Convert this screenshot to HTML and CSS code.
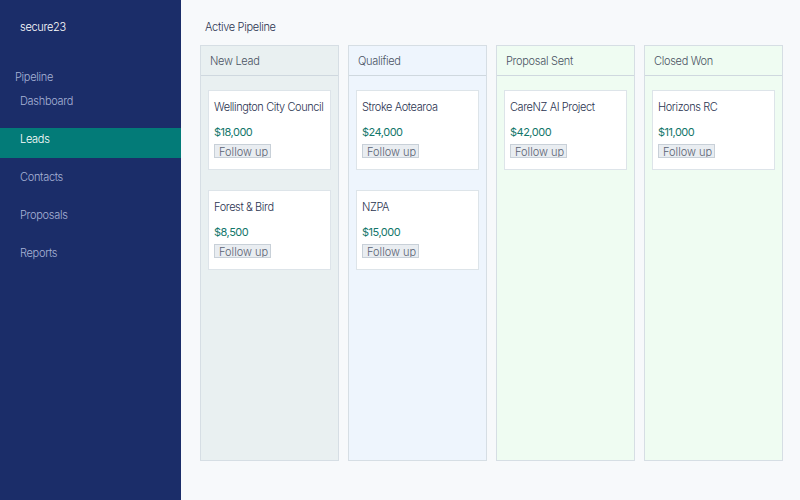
FILE: index.html
```html
<!DOCTYPE html>
<html>
<head>
<meta charset="utf-8">
<link rel="stylesheet" href="styles.css">
</head>
<body>
<div class="app">
  <aside class="sidebar">
    <div class="brand">secure23</div>
    <div class="section">Pipeline</div>
    <nav class="nav">
      <div class="nav-item">Dashboard</div>
      <div class="nav-item active">Leads</div>
      <div class="nav-item">Contacts</div>
      <div class="nav-item">Proposals</div>
      <div class="nav-item">Reports</div>
    </nav>
  </aside>
  <main class="main">
    <h1 class="title">Active Pipeline</h1>
    <div class="board">
      <section class="col col-new">
        <div class="col-head">New Lead</div>
        <div class="col-body">
          <div class="card">
            <div class="card-name">Wellington City Council</div>
            <div class="card-price">$18,000</div>
            <button class="btn">Follow up</button>
          </div>
          <div class="card">
            <div class="card-name">Forest &amp; Bird</div>
            <div class="card-price">$8,500</div>
            <button class="btn">Follow up</button>
          </div>
        </div>
      </section>
      <section class="col col-qual">
        <div class="col-head">Qualified</div>
        <div class="col-body">
          <div class="card">
            <div class="card-name">Stroke Aotearoa</div>
            <div class="card-price">$24,000</div>
            <button class="btn">Follow up</button>
          </div>
          <div class="card">
            <div class="card-name">NZPA</div>
            <div class="card-price">$15,000</div>
            <button class="btn">Follow up</button>
          </div>
        </div>
      </section>
      <section class="col col-prop">
        <div class="col-head">Proposal Sent</div>
        <div class="col-body">
          <div class="card">
            <div class="card-name">CareNZ AI Project</div>
            <div class="card-price">$42,000</div>
            <button class="btn">Follow up</button>
          </div>
        </div>
      </section>
      <section class="col col-won">
        <div class="col-head">Closed Won</div>
        <div class="col-body">
          <div class="card">
            <div class="card-name">Horizons RC</div>
            <div class="card-price">$11,000</div>
            <button class="btn">Follow up</button>
          </div>
        </div>
      </section>
    </div>
  </main>
</div>
</body>
</html>
```
FILE: styles.css
```css
* { box-sizing: border-box; }
html, body { margin: 0; padding: 0; }
body {
  font-family: Inter, "Liberation Sans", sans-serif;
  font-size: 11px;
  font-weight: 300;
  background: #f7f9fb;
  color: #2a3350;
  width: 800px;
  height: 500px;
  overflow: hidden;
}
.app { display: flex; height: 500px; }
.sidebar {
  width: 181px;
  flex: none;
  background: #1b2d69;
  color: #a7b3d6;
  letter-spacing: -0.3px;
}
.brand {
  color: #ffffff;
  padding: 20px 20px 0;
  line-height: 14px;
  height: 70px;
}
.section {
  padding-left: 15px;
  line-height: 14px;
  height: 14px;
  margin-bottom: 7px;
}
.nav { display: flex; flex-direction: column; gap: 8px; }
.nav-item {
  height: 30px;
  padding: 4px 20px 0;
  line-height: 14px;
}
.nav-item:first-child { height: 29px; padding-top: 3px; }
.nav-item.active {
  background: #037b78;
  color: #ffffff;
}
.main { flex: 1; padding: 20px 0 0 19px; }
.title {
  margin: 0 0 11px 5px;
  font-size: 11px;
  font-weight: 300;
  line-height: 14px;
  color: #2a3350;
  letter-spacing: -0.3px;
}
.board {
  display: grid;
  grid-template-columns: repeat(4, 139px);
  gap: 9px;
}
.col {
  height: 416px;
  border: 1px solid #d6dee4;
}
.col-new { background: #e9f0f1; }
.col-qual { background: #eef5fd; }
.col-prop, .col-won { background: #effcf2; }
.col-head {
  height: 30px;
  border-bottom: 1px solid #cfd8df;
  padding: 8px 9px 0;
  line-height: 14px;
  color: #4a5363;
  letter-spacing: -0.3px;
}
.col-body {
  padding: 14px 7px 0;
  display: flex;
  flex-direction: column;
  gap: 20px;
}
.card {
  height: 80px;
  background: #ffffff;
  border: 1px solid #dde4e9;
  padding: 9px 5px 0;
  letter-spacing: -0.4px;
}
.card-name { line-height: 14px; color: #2a3350; white-space: nowrap; }
.card-price { margin-top: 11px; line-height: 14px; color: #12766a; font-weight: 400; letter-spacing: -0.5px; }
.btn {
  display: block;
  margin-top: 5px;
  height: 14px;
  width: 57px;
  padding: 1px 4px 0;
  font-family: inherit;
  font-size: 11px;
  font-weight: 300;
  line-height: 13px;
  text-align: left;
  white-space: nowrap;
  color: #5a6272;
  background: #e9edf1;
  border: 1px solid #c8d0d8;
  border-radius: 0;
  overflow: hidden;
  letter-spacing: 0;
}
```
